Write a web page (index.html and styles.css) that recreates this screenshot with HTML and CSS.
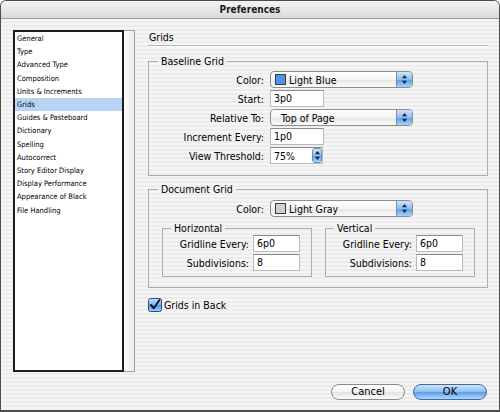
FILE: index.html
```html
<!DOCTYPE html>
<html>
<head>
<meta charset="utf-8">
<title>Preferences</title>
<link rel="stylesheet" href="styles.css">
</head>
<body>
<div class="window">
  <div class="titlebar">Preferences</div>
  <div class="body">
    <div class="sidebar">
      <ul class="list">
        <li>General</li>
        <li>Type</li>
        <li>Advanced Type</li>
        <li>Composition</li>
        <li>Units &amp; Increments</li>
        <li class="selected">Grids</li>
        <li>Guides &amp; Pasteboard</li>
        <li>Dictionary</li>
        <li>Spelling</li>
        <li>Autocorrect</li>
        <li>Story Editor Display</li>
        <li>Display Performance</li>
        <li>Appearance of Black</li>
        <li>File Handling</li>
      </ul>
      <div class="gutter"></div>
    </div>
    <div class="main">
      <div class="header">Grids</div>

      <fieldset class="group">
        <legend>Baseline Grid</legend>
        <div class="form">
          <span class="label">Color:</span>
          <div class="popup"><span class="swatch blue"></span><span class="ptext">Light Blue</span><span class="stepper"><svg width="7" height="11" viewBox="0 0 7 11"><path d="M3.5 1 L6 4.2 L1 4.2 Z M3.5 10 L6 6.8 L1 6.8 Z" fill="#12264a"/></svg></span></div>
          <span class="label">Start:</span>
          <div class="field">3p0</div>
          <span class="label">Relative To:</span>
          <div class="popup"><span class="ptext indent">Top of Page</span><span class="stepper"><svg width="7" height="11" viewBox="0 0 7 11"><path d="M3.5 1 L6 4.2 L1 4.2 Z M3.5 10 L6 6.8 L1 6.8 Z" fill="#12264a"/></svg></span></div>
          <span class="label">Increment Every:</span>
          <div class="field">1p0</div>
          <span class="label">View Threshold:</span>
          <div class="combo"><span class="ctext">75%</span><span class="stepper"><svg width="7" height="11" viewBox="0 0 7 11"><path d="M3.5 1 L6 4.2 L1 4.2 Z M3.5 10 L6 6.8 L1 6.8 Z" fill="#12264a"/></svg></span></div>
        </div>
      </fieldset>

      <fieldset class="group doc">
        <legend>Document Grid</legend>
        <div class="form">
          <span class="label">Color:</span>
          <div class="popup"><span class="swatch gray"></span><span class="ptext">Light Gray</span><span class="stepper"><svg width="7" height="11" viewBox="0 0 7 11"><path d="M3.5 1 L6 4.2 L1 4.2 Z M3.5 10 L6 6.8 L1 6.8 Z" fill="#12264a"/></svg></span></div>
        </div>
        <div class="subrow">
          <fieldset class="sub">
            <legend>Horizontal</legend>
            <div class="subform">
              <span class="label">Gridline Every:</span>
              <div class="field small">6p0</div>
              <span class="label">Subdivisions:</span>
              <div class="field small">8</div>
            </div>
          </fieldset>
          <fieldset class="sub">
            <legend>Vertical</legend>
            <div class="subform">
              <span class="label">Gridline Every:</span>
              <div class="field small">6p0</div>
              <span class="label">Subdivisions:</span>
              <div class="field small">8</div>
            </div>
          </fieldset>
        </div>
      </fieldset>

      <div class="check">
        <svg class="box" width="14" height="14" viewBox="0 0 14 14">
          <defs>
            <linearGradient id="cg" x1="0" y1="0" x2="0" y2="1">
              <stop offset="0" stop-color="#c9e1fb"/>
              <stop offset="0.5" stop-color="#7fb2ec"/>
              <stop offset="0.52" stop-color="#4f93e0"/>
              <stop offset="1" stop-color="#a9d3fb"/>
            </linearGradient>
          </defs>
          <rect x="0.5" y="0.5" width="13" height="13" rx="2" fill="url(#cg)" stroke="#2a4f80"/>
          <path d="M3 7 L5.8 10.3 L11.5 2" fill="none" stroke="#0c1830" stroke-width="2" stroke-linecap="round" stroke-linejoin="round"/>
        </svg>
        <span>Grids in Back</span>
      </div>
    </div>
  </div>
  <div class="footer">
    <div class="btn cancel">Cancel</div>
    <div class="btn ok">OK</div>
  </div>
</div>
</body>
</html>
```

FILE: styles.css
```css
body {
  margin: 0;
  background: #ffffff;
}

.window {
  width: 500px;
  height: 412px;
  box-sizing: border-box;
  border: 1px solid #4d4d4d;
  border-bottom-width: 2px;
  border-radius: 6px 6px 0 0;
  overflow: hidden;
  display: flex;
  flex-direction: column;
  background: repeating-linear-gradient(to bottom, #ececec 0 2px, #f5f5f5 2px 4px);
  font-family: "DejaVu Sans Condensed", "DejaVu Sans", sans-serif;
  color: #000;
}

.titlebar {
  flex: none;
  height: 17px;
  line-height: 17px;
  text-align: center;
  font-weight: bold;
  font-size: 10px;
  color: #1a1a1a;
  background: linear-gradient(#f4f4f4, #dadada);
  border-bottom: 1px solid #9c9c9c;
}

.body {
  flex: none;
  height: 353px;
  display: flex;
}

.sidebar {
  display: flex;
  margin: 11px 0 0 12px;
  height: 342px;
}

.list {
  width: 111px;
  box-sizing: border-box;
  margin: 0;
  padding: 0;
  list-style: none;
  background: #fff;
  border: 2px solid #1c1c1c;
  font-size: 7.5px;
  line-height: 13.2px;
}

.list li {
  padding-left: 2px;
  white-space: nowrap;
}

.list li.selected {
  background: #b7d4f5;
}

.gutter {
  width: 11px;
  box-sizing: border-box;
  background: linear-gradient(to right, #fdfdfd, #ececec);
  border: 1px solid #a0a0a0;
  border-left: none;
}

.main {
  margin-left: 13px;
  width: 340px;
  font-size: 10.5px;
}

.header {
  margin-top: 11px;
  height: 15px;
  line-height: 15px;
  padding-left: 1px;
  border-bottom: 1px solid #b4b4b4;
  box-shadow: 0 1px 0 #ffffff;
}

.group {
  margin: 9px 0 0 0;
  padding: 0 10px 11px 0;
  border: 1px solid #adadad;
  min-width: 0;
}

.group.doc {
  margin-top: 7px;
  padding-bottom: 10px;
}

legend {
  margin-left: 9px;
  padding: 0 3px;
  line-height: 12px;
  font-size: 10.5px;
}

.form {
  display: grid;
  grid-template-columns: 115px auto;
  column-gap: 6px;
  row-gap: 2px;
  grid-auto-rows: 17px;
  align-items: center;
  justify-items: start;
  margin-top: 4px;
}

.doc .form {
  margin-top: 5px;
}

.label {
  justify-self: end;
  white-space: nowrap;
}

.popup {
  width: 143px;
  height: 17px;
  box-sizing: border-box;
  border: 1px solid #8d8d8d;
  border-radius: 4px;
  background: linear-gradient(#ffffff, #f4f4f4 50%, #e6e6e6 52%, #fafafa);
  display: flex;
  align-items: center;
  overflow: hidden;
}

.swatch {
  width: 9px;
  height: 9px;
  margin-left: 4px;
  margin-right: 3px;
  border: 1px solid #3a3a3a;
  flex: none;
}

.swatch.blue {
  background: #4d96e6;
}

.swatch.gray {
  background: #cfcfcf;
}

.ptext {
  flex: 1;
  white-space: nowrap;
}

.ptext.indent {
  padding-left: 10px;
}

.stepper {
  width: 15px;
  height: 100%;
  flex: none;
  display: flex;
  align-items: center;
  justify-content: center;
  border-left: 1px solid #6f8fb8;
  background: linear-gradient(#cfe4fb, #8ebcf0 50%, #5c9ee6 52%, #a9d2fa);
}

.field {
  width: 54px;
  height: 17px;
  box-sizing: border-box;
  background: #fff;
  border: 1px solid #b9b9b9;
  border-top-color: #8a8a8a;
  padding-left: 3px;
  line-height: 15px;
}

.field.small {
  width: 47px;
}

.combo {
  width: 53px;
  height: 17px;
  box-sizing: border-box;
  display: flex;
  align-items: center;
  background: #fff;
  border: 1px solid #b9b9b9;
  border-top-color: #8a8a8a;
}

.combo .ctext {
  flex: 1;
  padding-left: 3px;
}

.combo .stepper {
  width: 10px;
  border: 1px solid #6f8fb8;
  border-radius: 3px;
  box-sizing: border-box;
}

.subrow {
  display: flex;
  gap: 13px;
  margin: 5px 0 0 13px;
}

.sub {
  width: 150px;
  box-sizing: border-box;
  margin: 0;
  padding: 0 0 5px 0;
  border: 1px solid #adadad;
  min-width: 0;
}

.sub legend {
  margin-left: 8px;
}

.subform {
  display: grid;
  grid-template-columns: 86px 47px;
  column-gap: 4px;
  row-gap: 2px;
  grid-auto-rows: 17px;
  align-items: center;
  margin-top: 1px;
}

.check {
  display: flex;
  align-items: center;
  gap: 2px;
  margin-top: 10px;
  height: 14px;
  font-size: 10.5px;
}

.check .box {
  flex: none;
}

.footer {
  flex: none;
  display: flex;
  justify-content: flex-end;
  gap: 8px;
  padding: 12px 12px 0 0;
}

.btn {
  width: 74px;
  height: 16px;
  box-sizing: border-box;
  border-radius: 8px;
  text-align: center;
  line-height: 14px;
  font-size: 11px;
}

.btn.cancel {
  border: 1px solid #8a8a8a;
  background: linear-gradient(#ffffff, #f3f3f3 50%, #e3e3e3 52%, #fbfbfb);
}

.btn.ok {
  border: 1px solid #3b6aa6;
  background: linear-gradient(#cde4fb, #8fbdf0 50%, #5b9de7 52%, #b0d8fc);
}
```
